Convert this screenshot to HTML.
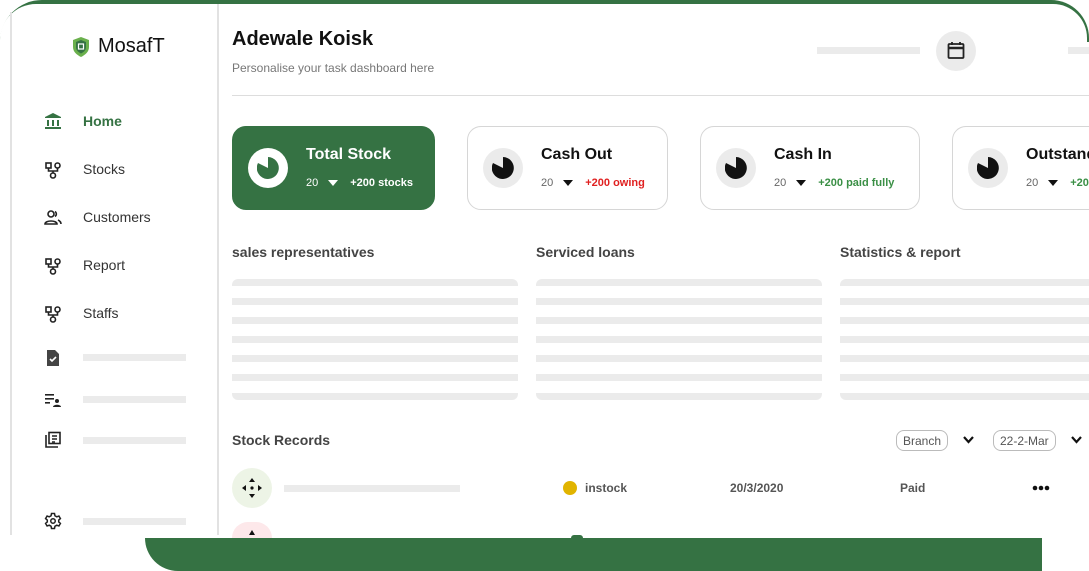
<!DOCTYPE html>
<html><head><meta charset="utf-8">
<style>
*{margin:0;padding:0;box-sizing:border-box}
body{width:1089px;height:571px;overflow:hidden;background:#fff;font-family:"Liberation Sans",sans-serif;position:relative}
.abs{position:absolute}
.g{background:#ebebeb}
.nav{position:absolute;left:83px;font-size:14px;color:#333}
.ic{position:absolute;left:44px}
.card{position:absolute;top:126px;height:84px;border:1px solid #d6d6d6;border-radius:14px;background:#fff}
.card .c{position:absolute;left:15px;top:21px;width:40px;height:40px;border-radius:50%;background:#ebebeb}
.card .t{position:absolute;left:73px;top:19px;font-size:16px;font-weight:bold;color:#111}
.card .s{position:absolute;left:73px;top:50px;font-size:11px;color:#666;white-space:nowrap}
.card .s b{font-size:11px}
.tri{display:inline-block;width:0;height:0;border-left:5px solid transparent;border-right:5px solid transparent;border-top:6px solid #111;margin:0 12px 1px 10px;vertical-align:middle}
.sec{position:absolute;top:244px;font-size:14px;font-weight:bold;color:#444}
.pill{position:absolute;top:430px;height:21px;border:1px solid #bbb;border-radius:8px;font-size:12px;color:#555;padding:3px 6px}
</style></head><body>
<div class="abs" style="left:0;top:0;width:1089px;height:560px;background:#357243;border-radius:42px 38px 0 0"></div>
<div class="abs" style="left:0;top:4px;width:1087px;height:560px;background:#fff;border-radius:36px 34px 0 0"></div>
<div class="abs" style="left:1080px;top:42px;width:9px;height:520px;background:#fff"></div>
<div class="abs" style="left:0;top:535px;width:1089px;height:36px;background:#fff"></div>
<div class="abs" style="left:145px;top:538px;width:897px;height:33px;background:#357243;border-radius:0 0 0 36px"></div>
<!-- sidebar lines -->
<div class="abs" style="left:10px;top:12px;width:2px;height:523px;background:#e2e2e2"></div>
<div class="abs" style="left:217px;top:4px;width:2px;height:531px;background:#e2e2e2"></div>
<!-- logo -->
<svg class="abs" style="left:73px;top:37px" width="16" height="20" viewBox="0 0 16 20"><path d="M8 0L16 3V10C16 15 12 18 8 20C4 18 0 15 0 10V3Z" fill="#6ab04c"/><path d="M8 3L13 5V10C13 13 11 15 8 16.5C5 15 3 13 3 10V5Z" fill="#357243"/><rect x="5.5" y="7" width="5" height="5" fill="none" stroke="#fff" stroke-width="1.2"/></svg>
<div class="abs" style="left:98px;top:35px;font-size:20px;color:#111">MosafT</div>
<!-- nav -->
<svg class="ic" style="top:112px" width="18" height="18" viewBox="0 0 18 18" fill="#357243"><path d="M9 1L17 5V6H1V5Z"/><rect x="3" y="8" width="2" height="6"/><rect x="8" y="8" width="2" height="6"/><rect x="13" y="8" width="2" height="6"/><rect x="1" y="15" width="16" height="2"/></svg>
<div class="nav" style="top:113px;color:#357243;font-weight:bold">Home</div>
<svg class="ic" style="top:161px" width="18" height="18" viewBox="0 0 18 18" fill="none" stroke="#222" stroke-width="1.6"><rect x="2" y="2" width="5" height="5"/><circle cx="13.5" cy="4.5" r="2.5"/><circle cx="9" cy="14.5" r="2.5"/><path d="M4.5 7V10H13.5V7M9 10V12"/></svg>
<div class="nav" style="top:161px">Stocks</div>
<svg class="ic" style="top:209px" width="18" height="18" viewBox="0 0 18 18" fill="none" stroke="#222" stroke-width="1.6"><circle cx="7" cy="5" r="3"/><path d="M1 15C1 11 13 11 13 15Z"/><path d="M11 2.5A3 3 0 0 1 11 7.5M14 11C16 12 17 13 17 15"/></svg>
<div class="nav" style="top:209px">Customers</div>
<svg class="ic" style="top:257px" width="18" height="18" viewBox="0 0 18 18" fill="none" stroke="#222" stroke-width="1.6"><rect x="2" y="2" width="5" height="5"/><circle cx="13.5" cy="4.5" r="2.5"/><circle cx="9" cy="14.5" r="2.5"/><path d="M4.5 7V10H13.5V7M9 10V12"/></svg>
<div class="nav" style="top:257px">Report</div>
<svg class="ic" style="top:305px" width="18" height="18" viewBox="0 0 18 18" fill="none" stroke="#222" stroke-width="1.6"><rect x="2" y="2" width="5" height="5"/><circle cx="13.5" cy="4.5" r="2.5"/><circle cx="9" cy="14.5" r="2.5"/><path d="M4.5 7V10H13.5V7M9 10V12"/></svg>
<div class="nav" style="top:305px">Staffs</div>
<svg class="ic" style="top:349px" width="18" height="18" viewBox="0 0 18 18"><path d="M3 1H11L15 5V17H3Z" fill="#444"/><path d="M6 10L8 12L12 8" stroke="#fff" stroke-width="1.6" fill="none"/></svg>
<div class="abs g" style="left:83px;top:354px;width:103px;height:7px"></div>
<svg class="ic" style="top:391px" width="18" height="18" viewBox="0 0 18 18" fill="#222"><rect x="1" y="3" width="9" height="1.6"/><rect x="1" y="7" width="9" height="1.6"/><rect x="1" y="11" width="5" height="1.6"/><circle cx="13" cy="10" r="2"/><path d="M9 16C9 13 17 13 17 16Z"/></svg>
<div class="abs g" style="left:83px;top:396px;width:103px;height:7px"></div>
<svg class="ic" style="top:431px" width="18" height="18" viewBox="0 0 18 18" fill="none" stroke="#222" stroke-width="1.6"><rect x="5" y="1.5" width="11" height="11"/><path d="M2 4V16H14"/><path d="M8 5H13M8 8H13M8 11H11"/></svg>
<div class="abs g" style="left:83px;top:437px;width:103px;height:7px"></div>
<svg class="ic" style="top:512px" width="18" height="18" viewBox="0 0 24 24" fill="none" stroke="#222" stroke-width="2"><circle cx="12" cy="12" r="3"/><path d="M10 2h4l.6 3 2.4 1.4 2.9-1 2 3.4-2.3 2v2.4l2.3 2-2 3.4-2.9-1L14.6 19 14 22h-4l-.6-3L7 17.6l-2.9 1-2-3.4 2.3-2v-2.4l-2.3-2 2-3.4 2.9 1L9.4 5Z"/></svg>
<div class="abs g" style="left:83px;top:518px;width:103px;height:7px"></div>
<!-- header -->
<div class="abs" style="left:232px;top:28px;font-size:20px;font-weight:bold;color:#111">Adewale Koisk</div>
<div class="abs" style="left:232px;top:61px;font-size:12px;color:#777">Personalise your task dashboard here</div>
<div class="abs" style="left:232px;top:95px;width:857px;height:1px;background:#ddd"></div>
<div class="abs g" style="left:817px;top:47px;width:103px;height:7px"></div>
<div class="abs" style="left:936px;top:31px;width:40px;height:40px;border-radius:50%;background:#ebebeb"></div>
<svg class="abs" style="left:947px;top:41px" width="18" height="19" viewBox="0 0 18 19" fill="none" stroke="#222" stroke-width="1.8"><rect x="1.5" y="3" width="15" height="14" rx="1"/><path d="M1.5 7H16.5" stroke-width="2.5"/><path d="M5 1V4M13 1V4"/></svg>
<div class="abs g" style="left:1068px;top:47px;width:30px;height:7px"></div>
<!-- cards -->
<div class="card" style="left:232px;width:203px;background:#357243;border-color:#357243">
 <div class="c" style="background:#fff"></div>
 <svg class="abs" style="left:24px;top:30px" width="22" height="22" viewBox="0 0 22 22"><path d="M11 0A11 11 0 1 1 1 6L11 11Z" fill="#357243"/></svg>
 <div class="t" style="color:#fff">Total Stock</div>
 <div class="s" style="color:#fff">20<span class="tri" style="border-top-color:#fff"></span><b>+200 stocks</b></div>
</div>
<div class="card" style="left:467px;width:201px">
 <div class="c"></div><svg class="abs" style="left:24px;top:30px" width="22" height="22" viewBox="0 0 22 22"><path d="M11 0A11 11 0 1 1 1 6L11 11Z" fill="#111"/></svg>
 <div class="t">Cash Out</div>
 <div class="s">20<span class="tri"></span><b style="color:#e02020">+200 owing</b></div>
</div>
<div class="card" style="left:700px;width:220px">
 <div class="c"></div><svg class="abs" style="left:24px;top:30px" width="22" height="22" viewBox="0 0 22 22"><path d="M11 0A11 11 0 1 1 1 6L11 11Z" fill="#111"/></svg>
 <div class="t">Cash In</div>
 <div class="s">20<span class="tri"></span><b style="color:#3a8f45">+200 paid fully</b></div>
</div>
<div class="card" style="left:952px;width:200px">
 <div class="c"></div><svg class="abs" style="left:24px;top:30px" width="22" height="22" viewBox="0 0 22 22"><path d="M11 0A11 11 0 1 1 1 6L11 11Z" fill="#111"/></svg>
 <div class="t">Outstanding</div>
 <div class="s">20<span class="tri"></span><b style="color:#3a8f45">+200</b></div>
</div>
<!-- sections -->
<div class="sec" style="left:232px">sales representatives</div>
<div class="sec" style="left:536px">Serviced loans</div>
<div class="sec" style="left:840px">Statistics &amp; report</div>
<div id="sk"></div>
<script>
var h='';[232,536,840].forEach(function(x){for(var i=0;i<7;i++){var r=i==0?'border-radius:6px 6px 0 0':(i==6?'border-radius:0 0 6px 6px':'');h+='<div class="abs g" style="left:'+x+'px;top:'+(279+i*19)+'px;width:286px;height:7px;'+r+'"></div>';}});document.getElementById('sk').innerHTML=h;
</script>
<!-- stock records -->
<div class="abs" style="left:232px;top:432px;font-size:14px;font-weight:bold;color:#444">Stock Records</div>
<div class="pill" style="left:896px">Branch</div>
<svg class="abs" style="left:962px;top:435px" width="13" height="10" viewBox="0 0 13 10"><path d="M2 2L6.5 7L11 2" stroke="#111" stroke-width="2.2" fill="none"/></svg>
<div class="pill" style="left:993px">22-2-Mar</div>
<svg class="abs" style="left:1070px;top:435px" width="13" height="10" viewBox="0 0 13 10"><path d="M2 2L6.5 7L11 2" stroke="#111" stroke-width="2.2" fill="none"/></svg>
<div class="abs" style="left:232px;top:468px;width:40px;height:40px;border-radius:50%;background:#edf4e6"></div>
<svg class="abs" style="left:242px;top:478px" width="20" height="20" viewBox="0 0 20 20" fill="#111"><path d="M10 0L13 4H7Z"/><path d="M10 20L13 16H7Z"/><path d="M0 10L4 7V13Z"/><path d="M20 10L16 7V13Z"/><circle cx="10" cy="10" r="1.6"/></svg>
<div class="abs g" style="left:284px;top:485px;width:176px;height:7px"></div>
<div class="abs" style="left:563px;top:481px;width:14px;height:14px;border-radius:50%;background:#e1b400"></div>
<div class="abs" style="left:585px;top:481px;font-size:12px;font-weight:bold;color:#555">instock</div>
<div class="abs" style="left:730px;top:481px;font-size:12px;font-weight:bold;color:#555">20/3/2020</div>
<div class="abs" style="left:900px;top:481px;font-size:12px;font-weight:bold;color:#555">Paid</div>
<svg class="abs" style="left:1032px;top:485px" width="18" height="6" viewBox="0 0 18 6" fill="#111"><circle cx="3" cy="3" r="2.3"/><circle cx="9" cy="3" r="2.3"/><circle cx="15" cy="3" r="2.3"/></svg>
<div class="abs" style="left:232px;top:522px;width:40px;height:16px;border-radius:20px 20px 0 0;background:#fde8ea"></div>
<svg class="abs" style="left:247px;top:530px" width="10" height="8" viewBox="0 0 10 8"><path d="M5 0L8 5H2Z" fill="#111"/></svg>
<div class="abs" style="left:571px;top:535px;width:12px;height:3px;border-radius:6px 6px 0 0;background:#357243"></div>
</body></html>
